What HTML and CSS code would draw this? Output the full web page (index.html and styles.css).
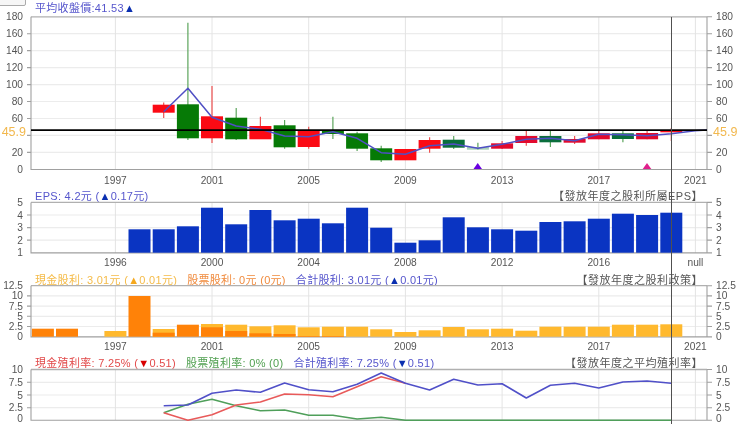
FILE: index.html
```html
<!DOCTYPE html>
<html lang="zh-Hant">
<head>
<meta charset="utf-8">
<title>股利政策</title>
<link rel="stylesheet" href="styles.css">
</head>
<body>
<main class="app">
  <div class="stub"></div>

  <section class="panel">
    <div class="legend l1"><span class="blue">平均收盤價:41.53<b class="a-blue">▲</b></span></div>
    <svg class="chart c1" viewBox="0 16 740 169" width="740" height="169">
      <g class="hgrid">
        <path d="M31 33.7H707M31 50.6H707M31 67.6H707M31 84.6H707M31 101.5H707M31 118.5H707M31 135.4H707M31 152.4H707"/>
      </g>
      <g class="vgrid"><path d="M115.4 17V169M212 17V169M308.7 17V169M405.4 17V169M502.1 17V169M598.8 17V169M695.4 17V169"/></g>
      <path class="top" d="M31 16.8H707"/>
      <path class="axis" d="M31 16.8V169.5H707V16.8M27 33.7H31M27 50.6H31M27 67.6H31M27 84.6H31M27 101.5H31M27 118.5H31M27 135.4H31M27 152.4H31M707 16.8H712M707 33.7H712M707 50.6H712M707 67.6H712M707 84.6H712M707 101.5H712M707 118.5H712M707 135.4H712M707 152.4H712M707 169.5H712"/>
      <g class="wick-g"><path d="M187.9 22.7V140M236.2 108V140M284.6 120V148.7M332.9 116.7V139M357.1 131.7V151M381.2 145.7V162M453.7 136V149M477.9 142.7V150M550.4 130.7V147M622.9 131V142.3"/></g>
      <g class="wick-r"><path d="M163.7 102.5V118M212 86V143M260.4 116.7V139M308.7 126.7V148.7M429.6 137.3V152.7M502.1 141V149M526.3 130.7V145.7M574.6 136V144M598.8 131V139.3M647.1 131V139.3M671.3 128V141"/></g>
      <g class="body-g">
        <rect x="176.9" y="104.3" width="22" height="34"/>
        <rect x="225.2" y="117.7" width="22" height="21.6"/>
        <rect x="273.6" y="125.3" width="22" height="22"/>
        <rect x="321.9" y="130.7" width="22" height="3.3"/>
        <rect x="346.1" y="133.3" width="22" height="15.4"/>
        <rect x="370.2" y="148.3" width="22" height="12"/>
        <rect class="dim" x="442.7" y="139.7" width="22" height="8"/>
        <rect class="pale" x="466.9" y="147" width="22" height="2.7"/>
        <rect class="dim" x="539.4" y="136" width="22" height="6.3"/>
        <rect class="dim" x="611.9" y="133.3" width="22" height="5.7"/>
      </g>
      <g class="body-r">
        <rect x="152.7" y="104.7" width="22" height="8"/>
        <rect x="201" y="116.3" width="22" height="22"/>
        <rect x="249.4" y="126" width="22" height="13.3"/>
        <rect x="297.7" y="130.7" width="22" height="16.3"/>
        <rect x="394.4" y="149" width="22" height="11.3"/>
        <rect x="418.6" y="140" width="22" height="8.7"/>
        <rect class="dim" x="491.1" y="143.3" width="22" height="5.4"/>
        <rect class="dim" x="515.3" y="136" width="22" height="7"/>
        <rect class="dim" x="563.6" y="139" width="22" height="3.7"/>
        <rect class="dim" x="587.8" y="133.3" width="22" height="6"/>
        <rect class="dim" x="636.1" y="133" width="22" height="6.3"/>
        <rect x="660.3" y="130" width="22" height="2.3"/>
      </g>
      <polyline class="ma" points="163.7,111.7 187.9,88.3 212,117.3 236.2,126 260.4,129.3 284.6,136 308.7,136.7 332.9,131.7 357.1,138.3 381.2,152.7 405.4,154.3 429.6,145.7 453.7,144 477.9,148.3 502.1,144.3 526.3,139.3 550.4,138.3 574.6,140.7 598.8,134.3 622.9,134.7 647.1,135.7 671.3,133.7 695,130.7 707,130"/>
      <path class="hline" d="M31 130.2H707"/>
      <polygon class="tri-p" points="477.7,163 473.5,169 482,169"/>
      <polygon class="tri-m" points="647,163 642.7,169 651.3,169"/>
      <g class="yl">
        <text x="23" y="16.7">180</text><text x="23" y="33.7">160</text><text x="23" y="50.6">140</text><text x="23" y="67.6">120</text><text x="23" y="84.6">100</text><text x="23" y="101.5">80</text><text x="23" y="118.5">60</text><text x="23" y="152.4">20</text><text x="23" y="169.3">0</text>
      </g>
      <g class="yr">
        <text x="716" y="16.7">180</text><text x="716" y="33.7">160</text><text x="716" y="50.6">140</text><text x="716" y="67.6">120</text><text x="716" y="84.6">100</text><text x="716" y="101.5">80</text><text x="716" y="118.5">60</text><text x="716" y="152.4">20</text><text x="716" y="169.3">0</text>
      </g>
      <text class="price pl" x="26" y="132">45.9</text>
      <text class="price pr" x="713" y="132">45.9</text>
      <g class="xl">
        <text x="115.4" y="180">1997</text><text x="212" y="180">2001</text><text x="308.7" y="180">2005</text><text x="405.4" y="180">2009</text><text x="502.1" y="180">2013</text><text x="598.8" y="180">2017</text><text x="695.4" y="180">2021</text>
      </g>
    </svg>
  </section>

  <section class="panel">
    <div class="legend l2"><span class="blue">EPS: 4.2元 (<b class="a-blue">▲</b>0.17元)</span><span class="note">【發放年度之股利所屬EPS】</span></div>
    <svg class="chart c2" viewBox="0 201 740 69" width="740" height="69">
      <g class="hgrid"><path d="M31 215H707M31 227.6H707M31 240.1H707"/></g>
      <g class="vgrid"><path d="M115.4 202V253M212 202V253M308.7 202V253M405.4 202V253M502.1 202V253M598.8 202V253M695.4 202V253"/></g>
      <path class="top" d="M31 202.4H707"/>
      <path class="axis" d="M31 202.4V252.9H707V202.4M27 215H31M27 227.6H31M27 240.1H31M707 202.4H712M707 215H712M707 227.6H712M707 240.1H712M707 252.9H712"/>
      <g class="bar-b">
        <rect x="128.5" y="229.3" width="22" height="23.4"/>
        <rect x="152.7" y="229.3" width="22" height="23.4"/>
        <rect x="176.9" y="226.3" width="22" height="26.4"/>
        <rect x="201" y="207.7" width="22" height="45"/>
        <rect x="225.2" y="224.3" width="22" height="28.4"/>
        <rect x="249.4" y="210" width="22" height="42.7"/>
        <rect x="273.6" y="220.3" width="22" height="32.4"/>
        <rect x="297.7" y="218.7" width="22" height="34"/>
        <rect x="321.9" y="223.3" width="22" height="29.4"/>
        <rect x="346.1" y="207.7" width="22" height="45"/>
        <rect x="370.2" y="227.7" width="22" height="25"/>
        <rect x="394.4" y="242.7" width="22" height="10"/>
        <rect x="418.6" y="240.3" width="22" height="12.4"/>
        <rect x="442.7" y="217.3" width="22" height="35.4"/>
        <rect x="466.9" y="227.3" width="22" height="25.4"/>
        <rect x="491.1" y="229.3" width="22" height="23.4"/>
        <rect x="515.3" y="230.7" width="22" height="22"/>
        <rect x="539.4" y="222" width="22" height="30.7"/>
        <rect x="563.6" y="221.3" width="22" height="31.4"/>
        <rect x="587.8" y="218.7" width="22" height="34"/>
        <rect x="611.9" y="213.7" width="22" height="39"/>
        <rect x="636.1" y="215" width="22" height="37.7"/>
        <rect x="660.3" y="212.7" width="22" height="40"/>
      </g>
      <g class="yl"><text x="23" y="202.3">5</text><text x="23" y="215">4</text><text x="23" y="227.3">3</text><text x="23" y="240">2</text><text x="23" y="252.7">1</text></g>
      <g class="yr"><text x="716" y="202.3">5</text><text x="716" y="215">4</text><text x="716" y="227.3">3</text><text x="716" y="240">2</text><text x="716" y="252.7">1</text></g>
      <g class="xl"><text x="115.4" y="262.7">1996</text><text x="212" y="262.7">2000</text><text x="308.7" y="262.7">2004</text><text x="405.4" y="262.7">2008</text><text x="502.1" y="262.7">2012</text><text x="598.8" y="262.7">2016</text><text x="695.4" y="262.7">null</text></g>
    </svg>
  </section>

  <section class="panel">
    <div class="legend l3">
      <span class="group">
        <span class="yellow">現金股利: 3.01元 (<b class="a-yellow">▲</b>0.01元)</span>
        <span class="orange">股票股利: 0元 (0元)</span>
        <span class="blue">合計股利: 3.01元 (<b class="a-blue">▲</b>0.01元)</span>
      </span>
      <span class="note">【發放年度之股利政策】</span>
    </div>
    <svg class="chart c3" viewBox="0 284 740 70" width="740" height="70">
      <g class="hgrid"><path d="M31 295.9H707M31 306.1H707M31 316.3H707M31 326.5H707"/></g>
      <g class="vgrid"><path d="M115.4 286V337M212 286V337M308.7 286V337M405.4 286V337M502.1 286V337M598.8 286V337M695.4 286V337"/></g>
      <path class="top" d="M31 285.7H707"/>
      <path class="axis" d="M31 285.7V336.9H707V285.7M27 295.9H31M27 306.1H31M27 316.3H31M27 326.5H31M707 285.7H712M707 295.9H712M707 306.1H712M707 316.3H712M707 326.5H712M707 336.9H712"/>
      <g class="bar-y">
        <rect x="104.4" y="331" width="22" height="5.7"/>
        <rect x="152.7" y="329" width="22" height="7.7"/>
        <rect x="201" y="324" width="22" height="12.7"/>
        <rect x="225.2" y="324.7" width="22" height="12"/>
        <rect x="249.4" y="326.3" width="22" height="10.4"/>
        <rect x="273.6" y="325.3" width="22" height="11.4"/>
        <rect x="297.7" y="327.3" width="22" height="9.4"/>
        <rect x="321.9" y="326.7" width="22" height="10"/>
        <rect x="346.1" y="326.7" width="22" height="10"/>
        <rect x="370.2" y="329.3" width="22" height="7.4"/>
        <rect x="394.4" y="332" width="22" height="4.7"/>
        <rect x="418.6" y="330.3" width="22" height="6.4"/>
        <rect x="442.7" y="327" width="22" height="9.7"/>
        <rect x="466.9" y="329.3" width="22" height="7.4"/>
        <rect x="491.1" y="328.7" width="22" height="8"/>
        <rect x="515.3" y="330.7" width="22" height="6"/>
        <rect x="539.4" y="326.7" width="22" height="10"/>
        <rect x="563.6" y="326.7" width="22" height="10"/>
        <rect x="587.8" y="326.7" width="22" height="10"/>
        <rect x="611.9" y="324.7" width="22" height="12"/>
        <rect x="636.1" y="324.7" width="22" height="12"/>
        <rect x="660.3" y="324.3" width="22" height="12.4"/>
      </g>
      <g class="bar-o">
        <rect x="31.9" y="328.7" width="22" height="8"/>
        <rect x="56" y="328.7" width="22" height="8"/>
        <rect x="128.5" y="296" width="22" height="40.7"/>
        <rect x="152.7" y="332.7" width="22" height="4"/>
        <rect x="176.9" y="324.7" width="22" height="12"/>
        <rect x="201" y="327.3" width="22" height="9.4"/>
        <rect x="225.2" y="331" width="22" height="5.7"/>
        <rect x="249.4" y="333.3" width="22" height="3.4"/>
        <rect x="273.6" y="334" width="22" height="2.7"/>
        <rect x="297.7" y="336" width="22" height=".7"/>
        <rect x="321.9" y="336" width="22" height=".7"/>
      </g>
      <g class="yl"><text x="23" y="285.7">12.5</text><text x="23" y="295.9">10</text><text x="23" y="306.1">7.5</text><text x="23" y="316.3">5</text><text x="23" y="326.5">2.5</text><text x="23" y="336.7">0</text></g>
      <g class="yr"><text x="716" y="285.7">12.5</text><text x="716" y="295.9">10</text><text x="716" y="306.1">7.5</text><text x="716" y="316.3">5</text><text x="716" y="326.5">2.5</text><text x="716" y="336.7">0</text></g>
      <g class="xl"><text x="115.4" y="346.7">1997</text><text x="212" y="346.7">2001</text><text x="308.7" y="346.7">2005</text><text x="405.4" y="346.7">2009</text><text x="502.1" y="346.7">2013</text><text x="598.8" y="346.7">2017</text><text x="695.4" y="346.7">2021</text></g>
    </svg>
  </section>

  <section class="panel">
    <div class="legend l4">
      <span class="group">
        <span class="red">現金殖利率: 7.25% (<b class="a-red">▼</b>0.51)</span>
        <span class="green">股票殖利率: 0% (0)</span>
        <span class="blue">合計殖利率: 7.25% (<b class="a-blue">▼</b>0.51)</span>
      </span>
      <span class="note">【發放年度之平均殖利率】</span>
    </div>
    <svg class="chart c4" viewBox="0 368 740 56" width="740" height="56">
      <g class="hgrid"><path d="M31 382.3H707M31 395H707M31 407.7H707"/></g>
      <g class="vgrid"><path d="M115.4 370V420M212 370V420M308.7 370V420M405.4 370V420M502.1 370V420M598.8 370V420M695.4 370V420"/></g>
      <path class="top" d="M31 369.5H707"/>
      <path class="axis" d="M31 369.5V420.3H707V369.5M27 382.3H31M27 395H31M27 407.7H31M707 369.5H712M707 382.3H712M707 395H712M707 407.7H712M707 420.3H712"/>
      <polyline class="ln-g" points="163.7,412.7 187.9,404.3 212,399.3 236.2,405.7 260.4,410.7 284.6,410 308.7,415.3 332.9,415.3 357.1,419 381.2,417.3 405.4,420.3 671.3,420.3"/>
      <polyline class="ln-r" points="163.7,412.7 187.9,420.3 212,414.7 236.2,405 260.4,402 284.6,394 308.7,394.7 332.9,396.7 357.1,386.7 381.2,376.7 405.4,383.3"/>
      <polyline class="ln-b" points="163.7,405.7 187.9,405 212,393.3 236.2,390 260.4,392.3 284.6,383 308.7,389.7 332.9,391.7 357.1,384.3 381.2,373 405.4,383.3 429.6,390 453.7,379.3 477.9,385 502.1,383.7 526.3,398 550.4,385.3 574.6,383.3 598.8,388 622.9,382 647.1,381 671.3,383.3"/>
      <g class="yl"><text x="23" y="369.3">10</text><text x="23" y="382.3">7.5</text><text x="23" y="395">5</text><text x="23" y="407.7">2.5</text><text x="23" y="418.2">0</text></g>
      <g class="yr"><text x="716" y="369.3">10</text><text x="716" y="382.3">7.5</text><text x="716" y="395">5</text><text x="716" y="407.7">2.5</text><text x="716" y="418.2">0</text></g>
    </svg>
  </section>

  <div class="cursor"></div>
</main>
</body>
</html>
```

FILE: styles.css
```css
html, body { margin: 0; padding: 0; background: #fff; }
body { overflow: hidden; }

.app {
  position: relative;
  width: 740px;
  height: 424px;
  overflow: hidden;
  display: flex;
  flex-direction: column;
  font-family: "Liberation Sans", "Noto Sans CJK TC", sans-serif;
  filter: blur(0.5px);
}

.stub {
  position: absolute;
  left: -2px;
  top: -6px;
  width: 26px;
  height: 10px;
  background: #f6f6f6;
  border: 1px solid #aaa;
  border-radius: 2px;
}

.panel { display: flex; flex-direction: column; }

.legend {
  display: flex;
  justify-content: space-between;
  align-items: center;
  box-sizing: border-box;
  width: 740px;
  padding: 0 37px 0 35px;
  font-size: 11px;
  letter-spacing: 0.3px;
  line-height: 14px;
  white-space: nowrap;
}
.legend b { font-weight: normal; }
.l1 { height: 16px; }
.l2 { height: 16px; padding-top: 5px; }
.l3 { height: 14px; padding-top: 6px; }
.l4 { height: 14px; padding-top: 3px; }

.group { display: flex; gap: 10px; }

.note { color: #555; font-size: 11px; letter-spacing: 0.5px; }

.blue { color: #5555cc; }
.yellow { color: #f5bb48; }
.orange { color: #f08a3c; }
.red { color: #e24a4a; }
.green { color: #4f9f4f; }
.a-blue { color: #0a2fb0; }
.a-yellow { color: #f5a81e; }
.a-red { color: #d80000; }

.chart { display: block; overflow: visible; flex: none; }
.chart path, .chart polyline { fill: none; }

.hgrid path { stroke: #ececec; stroke-width: 1.2; }
.vgrid path { stroke: #e4e4e4; stroke-width: 1; }
.top { stroke: #b0b0b0; stroke-width: 1.3; }
.axis { stroke: #a0a0a0; stroke-width: 1.1; }

.wick-g path { stroke: #5da55d; stroke-width: 1.2; }
.wick-r path { stroke: #ee5050; stroke-width: 1.2; }
.body-g rect { fill: #067a06; }
.body-g rect.dim { fill: #0a6e3c; }
.body-g rect.pale { fill: #a8d0b8; }
.body-r rect { fill: #fb0a14; }
.body-r rect.dim { fill: #e20a2e; }

.ma { stroke: #4f4fc4; stroke-width: 1.5; stroke-linejoin: round; }
.hline { stroke: #000; stroke-width: 1.8; }
.tri-p { fill: #6a00e0; }
.tri-m { fill: #e0208c; }

.bar-b rect { fill: #0a34c2; }
.bar-y rect { fill: #ffb92e; }
.bar-o rect { fill: #ff8208; }

.ln-b { stroke: #5050c8; stroke-width: 1.6; stroke-linejoin: round; }
.ln-r { stroke: #e85a5a; stroke-width: 1.5; stroke-linejoin: round; }
.ln-g { stroke: #4f9f5a; stroke-width: 1.5; stroke-linejoin: round; }

.chart text { font-size: 10.2px; fill: #555; dominant-baseline: central; }
.yl text { text-anchor: end; }
.yr text { text-anchor: start; }
.xl text { text-anchor: middle; }
.chart .price { font-size: 12.5px; fill: #f2b84e; }
.pl { text-anchor: end; }
.pr { text-anchor: start; }

.cursor {
  position: absolute;
  left: 670.5px;
  top: 17px;
  width: 1.5px;
  height: 407px;
  background: #505050;
}
```
